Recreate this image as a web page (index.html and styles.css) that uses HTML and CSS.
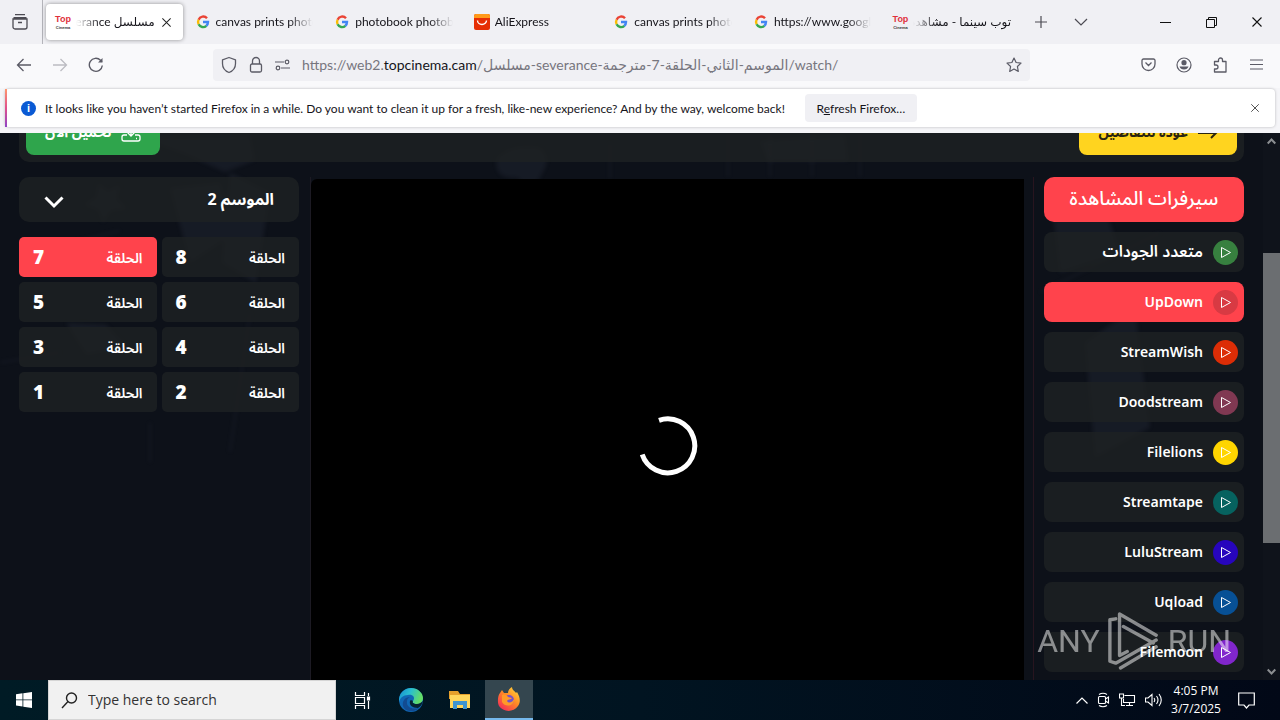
FILE: index.html
```html
<!DOCTYPE html>
<html lang="en">
<head>
<meta charset="utf-8">
<title>Top Cinema</title>
<link rel="stylesheet" href="styles.css">
</head>
<body>
<svg class="defs" aria-hidden="true">
  <symbol id="google" viewBox="0 0 16 16"><g fill="none" stroke-width="2.4"><path d="M12 4.2A5 5 0 0 0 3.6 5.7" stroke="#ea4335"/><path d="M3.6 5.7a5 5 0 0 0 0 4.6" stroke="#fbbc05"/><path d="M3.6 10.3a5 5 0 0 0 7.8 1.5" stroke="#34a853"/><path d="M8 8h5a5 5 0 0 1-1.7 3.8" stroke="#4285f4"/></g></symbol>
  <symbol id="play" viewBox="0 0 25 25"><path d="M8.500 7.500v10l9-5z" fill="none" stroke="#fff" stroke-linejoin="round"/></symbol>
  <symbol id="close" viewBox="0 0 12 12"><path d="M1.500 1.500l9 9M10.500 1.500l-9 9" fill="none" stroke="currentColor" stroke-width="1.100"/></symbol>
</svg>

<header class="tabs-bar">
  <button class="recent" aria-label="Recent browsing"><svg width="18" height="18" viewBox="0 0 18 18" fill="none" stroke="currentColor" stroke-width="1.300"><path d="M4 1.700h10M2.500 4.700h13M2 6h14v8a2 2 0 0 1-2 2H4a2 2 0 0 1-2-2zM7 9.500h4"/></svg></button>
  <nav class="tabs">
    <div class="tab active"><span class="logo"><b>Top</b><i>Cinema</i></span><span class="tab-title rtl" dir="rtl">مسلسل severance</span><button class="tab-close" aria-label="Close tab"><svg width="11" height="11"><use href="#close"/></svg></button></div>
    <div class="tab"><svg class="fav" width="16" height="16"><use href="#google"/></svg><span class="tab-title">canvas prints photo</span></div>
    <div class="tab"><svg class="fav" width="16" height="16"><use href="#google"/></svg><span class="tab-title">photobook photobook</span></div>
    <div class="tab"><svg class="fav" width="16" height="16" viewBox="0 0 16 16"><rect width="16" height="16" rx="2" fill="#e62e04"/><path d="M0 4V2a2 2 0 0 1 2-2h12a2 2 0 0 1 2 2v2z" fill="#ff9a1a"/><path d="M3.500 6.500a4.500 4 0 0 0 9 0" fill="none" stroke="#fff" stroke-width="1.400"/></svg><span class="tab-title">AliExpress</span></div>
    <div class="tab"><svg class="fav" width="16" height="16"><use href="#google"/></svg><span class="tab-title">canvas prints photo</span></div>
    <div class="tab"><svg class="fav" width="16" height="16"><use href="#google"/></svg><span class="tab-title">https://www.google.com</span></div>
    <div class="tab"><span class="logo"><b>Top</b><i>Cinema</i></span><span class="tab-title rtl" dir="rtl">توب سينما - مشاهدة</span></div>
  </nav>
  <button class="tab-tool" aria-label="New tab"><svg width="12" height="12" viewBox="0 0 12 12" stroke="currentColor" stroke-width="1.200"><path d="M6 0v12M0 6h12"/></svg></button>
  <button class="tab-tool" aria-label="List all tabs"><svg width="14" height="8" viewBox="0 0 14 8" fill="none" stroke="currentColor" stroke-width="1.200"><path d="M1 1l6 6 6-6"/></svg></button>
  <div class="window-controls">
    <button aria-label="Minimize"><svg width="11" height="11" viewBox="0 0 11 11" stroke="#111"><path d="M0 5.500h11"/></svg></button>
    <button aria-label="Restore"><svg width="11" height="11" viewBox="0 0 11 11" fill="none" stroke="#111"><path d="M.5 2.500h8v8h-8zM2.500 2.500v-2h8v8h-2"/></svg></button>
    <button aria-label="Close"><svg width="12" height="12"><use href="#close"/></svg></button>
  </div>
</header>

<div class="toolbar">
  <div class="nav-buttons">
    <button aria-label="Back"><svg width="16" height="14" viewBox="0 0 16 14" fill="none" stroke="currentColor" stroke-width="1.300"><path d="M15 7H2M7.500 1L1.500 7l6 6"/></svg></button>
    <button class="off" aria-label="Forward"><svg width="16" height="14" viewBox="0 0 16 14" fill="none" stroke="currentColor" stroke-width="1.300"><path d="M1 7h13M8.500 1l6 6-6 6"/></svg></button>
    <button aria-label="Reload"><svg width="16" height="16" viewBox="0 0 16 16" fill="none" stroke="currentColor" stroke-width="1.400"><path d="M14.300 8.500A6.500 6.500 0 1 1 12.500 3.300l1.500 1.500"/><path d="M14.500 1v4.500H10z" fill="currentColor" stroke="none"/></svg></button>
  </div>
  <div class="url-bar">
    <svg width="16" height="18" viewBox="0 0 16 18" fill="none" stroke="currentColor" stroke-width="1.300"><path d="M8 1.500l6.500 2.300v4C14.500 12 12 15 8 16.500 4 15 1.500 12 1.500 7.800v-4z" stroke-linejoin="round"/></svg>
    <svg width="14" height="18" viewBox="0 0 14 18" fill="none" stroke="currentColor" stroke-width="1.300"><rect x="1.500" y="8" width="11" height="8" rx="1.500"/><path d="M3.500 8V5a3.500 3.500 0 0 1 7 0v3"/></svg>
    <svg width="15" height="12" viewBox="0 0 15 12" fill="none" stroke="currentColor" stroke-width="1.200"><path d="M0 3h9M6 9h9"/><circle cx="12" cy="3" r="1.800"/><circle cx="3" cy="9" r="1.800"/></svg>
    <div class="url" role="textbox" tabindex="0" aria-label="Address">https://web2.<b>topcinema.cam</b>/مسلسل-severance-الموسم-الثاني-الحلقة-7-مترجمة/watch/</div>
    <button aria-label="Bookmark"><svg width="16" height="16" viewBox="0 0 16 16" fill="none" stroke="currentColor" stroke-width="1.200" stroke-linejoin="round"><path d="M8 1l2.100 4.500 4.900.6-3.600 3.400.9 4.900L8 12l-4.300 2.400.9-4.900L1 6.100l4.900-.6z"/></svg></button>
  </div>
  <div class="extras">
    <button aria-label="Save to Pocket"><svg width="15" height="14" viewBox="0 0 15 14" fill="none" stroke="currentColor" stroke-width="1.300"><path d="M2.500 1h10A1.500 1.500 0 0 1 14 2.500V6A6.500 6.500 0 0 1 1 6V2.500A1.500 1.500 0 0 1 2.500 1zM4.500 4.500l3 3 3-3"/></svg></button>
    <button aria-label="Account"><svg width="16" height="16" viewBox="0 0 16 16" fill="none" stroke="currentColor" stroke-width="1.200"><circle cx="8" cy="8" r="7"/><circle cx="8" cy="5.700" r="2.600" fill="currentColor" stroke="none"/><path d="M3.500 9.500h9a4.700 4.200 0 0 1-9 0z" fill="currentColor" stroke="none"/></svg></button>
    <button aria-label="Extensions"><svg width="15" height="16" viewBox="0 0 15 16" fill="none" stroke="currentColor" stroke-width="1.300"><path d="M1.500 4.500h4V3a2 2 0 0 1 4 0v1.500H13v10.500H1.500v-3H3a2 2 0 0 0 0-4H1.500z" stroke-linejoin="round"/></svg></button>
    <button aria-label="Menu"><svg width="13" height="11" viewBox="0 0 13 11" stroke="currentColor" stroke-width="1.200"><path d="M0 1h13M0 5.500h13M0 10h13"/></svg></button>
  </div>
</div>

<div class="notice-wrap">
  <div class="notice">
    <span class="info">i</span>
    <p>It looks like you haven’t started Firefox in a while. Do you want to clean it up for a fresh, like-new experience? And by the way, welcome back!</p>
    <button class="refresh">R<u>e</u>fresh Firefox…</button>
    <button class="notice-close" aria-label="Dismiss"><svg width="10" height="10"><use href="#close"/></svg></button>
  </div>
</div>

<div class="viewport">
  <main class="page" dir="rtl" lang="ar">
    <svg class="backdrop" viewBox="0 0 1263 548" preserveAspectRatio="none" aria-hidden="true">
      <g fill="#6f7896" opacity=".1"><path d="M497 25q15-15 43-10 10 8 5 20l-15 28-12-18q-25 2-21-20zM760 8l85-6 3 26h-80zM140 5l110-3 5 25-30 12-40-18zM98 50l10 8 12-6-3 14 10 10-16 2-8 12-5-13-14-5 12-8zM170 55l50-5 15 50-45 30zM66 190l40 2 20 22-40 8zM1050 55l50 5 20 60-60 20zM1085 210l50-35 15 120-55 30zM230 40l40 20-14 90-34-20z"/></g>
      <g fill="none" stroke="#8a91a8" opacity=".07"><path d="M728 0v44M770 0v44M812 0v44M860 0v44M610 10v36M30 120l90-22M0 230l60-10M1040 160l120-60M150 290v40M250 180l-20 140" stroke-width="2"/></g>
    </svg>
    <section class="actions">
      <a class="action back" href="#details"><svg width="20" height="14" viewBox="0 0 20 14" fill="none" stroke="currentColor" stroke-width="2"><path d="M0 7h18M13 2l5 5-5 5"/></svg>عودة للتفاصيل</a>
      <a class="action download" href="#download"><svg width="20" height="20" viewBox="0 0 20 20" fill="none" stroke="currentColor" stroke-width="1.300"><path d="M10 1v12M6 9l4 4 4-4M6 12H3a2 2 0 0 0-2 2v2a2 2 0 0 0 2 2h14a2 2 0 0 0 2-2v-2a2 2 0 0 0-2-2h-3M15 15.500h1"/></svg>تحميل الآن</a>
    </section>
    <div class="columns">
      <section class="servers">
        <h2>سيرفرات المشاهدة</h2>
        <button class="server arabic"><svg class="dot green"><use href="#play"/></svg>متعدد الجودات</button>
        <button class="server current"><svg class="dot dark-red"><use href="#play"/></svg>UpDown</button>
        <button class="server"><svg class="dot red"><use href="#play"/></svg>StreamWish</button>
        <button class="server"><svg class="dot plum"><use href="#play"/></svg>Doodstream</button>
        <button class="server"><svg class="dot yellow"><use href="#play"/></svg>Filelions</button>
        <button class="server"><svg class="dot teal"><use href="#play"/></svg>Streamtape</button>
        <button class="server"><svg class="dot indigo"><use href="#play"/></svg>LuluStream</button>
        <button class="server"><svg class="dot blue"><use href="#play"/></svg>Uqload</button>
        <button class="server"><svg class="dot violet"><use href="#play"/></svg>Filemoon</button>
      </section>
      <section class="player-frame">
        <div class="player"><svg width="60" height="60" viewBox="0 0 60 60" fill="none" stroke="#fff" stroke-width="5"><path d="M21 4.300A27 27 0 1 1 4.200 38.500"/></svg></div>
      </section>
      <section class="season">
        <button class="season-head"><span>الموسم 2</span><svg width="20" height="13" viewBox="0 0 20 13" fill="none" stroke="#fff" stroke-width="3"><path d="M1.500 1.500L10 10l8.500-8.500"/></svg></button>
        <div class="episodes">
          <a href="#e8"><span>الحلقة</span><b>8</b></a>
          <a href="#e7" class="current"><span>الحلقة</span><b>7</b></a>
          <a href="#e6"><span>الحلقة</span><b>6</b></a>
          <a href="#e5"><span>الحلقة</span><b>5</b></a>
          <a href="#e4"><span>الحلقة</span><b>4</b></a>
          <a href="#e3"><span>الحلقة</span><b>3</b></a>
          <a href="#e2"><span>الحلقة</span><b>2</b></a>
          <a href="#e1"><span>الحلقة</span><b>1</b></a>
        </div>
      </section>
    </div>
  </main>
  <div class="scrollbar" aria-hidden="true">
    <svg width="9" height="17" viewBox="0 0 9 17" fill="none" stroke="#8b8e91" stroke-width="2"><path d="M.7 10.500l3.800-4 3.800 4"/></svg>
    <span class="space-top"></span><span class="thumb"></span><span class="space-bottom"></span>
    <svg width="9" height="17" viewBox="0 0 9 17" fill="none" stroke="#8b8e91" stroke-width="2"><path d="M.7 6.500l3.800 4 3.800-4"/></svg>
  </div>
  <div class="watermark"><span>ANY</span><svg width="54" height="62" viewBox="0 0 56 62" fill="none" stroke="#fff" stroke-width="3.500" stroke-linejoin="round" stroke-linecap="round"><path d="M9 8l-6 1v43l6 2 42-24M51 25L13 3v43l8-4M17 16l31 17M51 37L14 59"/></svg><span>RUN</span></div>
</div>

<footer class="taskbar">
  <button class="start" aria-label="Start"><svg width="16" height="16" viewBox="0 0 16 16" fill="#fff"><path d="M0 2.200l6.500-.9v6.200H0zM7.300 1.200L16 0v7.500H7.300zM0 8.300h6.500v6.200L0 13.600zM7.300 8.300H16V16l-8.700-1.200z"/></svg></button>
  <label class="search"><svg width="17" height="17" viewBox="0 0 17 17" fill="none" stroke="#222" stroke-width="1.400"><circle cx="10.500" cy="6" r="5"/><path d="M7 9.500L1 16"/></svg><input type="text" placeholder="Type here to search" aria-label="Search"></label>
  <div class="apps">
    <button class="app" aria-label="Task view"><svg width="17" height="17" viewBox="0 0 17 17" fill="none" stroke="#fff" stroke-width="1.200"><path d="M1.500 0v3.500h9V0M1.500 5.500h9v6h-9zM1.500 17v-3.500h9V17M14.500 1v3M14.500 9v8"/><path d="M13.500 5h2v3h-2z" fill="#fff"/></svg></button>
    <button class="app" aria-label="Edge"><svg width="26" height="26" viewBox="0 0 26 26"><defs><linearGradient id="edge" x1="0" x2="1" y2=".3"><stop stop-color="#168bd0"/><stop offset=".5" stop-color="#29bfd0"/><stop offset="1" stop-color="#64dd67"/></linearGradient></defs><circle cx="13" cy="13" r="12" fill="#1067b5"/><path d="M1 12C2 5 7 1 13 1c7 0 12 5 12 10 0 4-3 6-6 6-4 0-5-2-4-3 3-4-1-7-5-6-5 0-8 3-9 7z" fill="url(#edge)"/><path d="M9 14c-1 6 5 9 12 7-5 5-14 4-16-2-1-5 2-9 7-9-2 1-3 2-3 4z" fill="#124b91"/><path d="M15 14c-1 1 0 3 4 3 2 0 4-1 6-3-1 4-3 6-5 7-6 0-9-3-8-7 0-1 2-1 3 0z" fill="#062333"/></svg></button>
    <button class="app" aria-label="File Explorer"><svg width="22" height="20" viewBox="0 0 22 20"><path d="M0 1h9l2 3h10v5H0z" fill="#e5a02c"/><path d="M1 5h20v13H1z" fill="#ffd65c"/><path d="M4 11h14v8h-4v-4H8v4H4z" fill="#3d94d1"/></svg></button>
    <button class="app running" aria-label="Firefox"><svg width="24" height="24" viewBox="0 0 24 24"><defs><linearGradient id="fox" x1="1" y1="0" x2=".2" y2="1"><stop stop-color="#ffe23e"/><stop offset=".5" stop-color="#ff8a25"/><stop offset="1" stop-color="#f52b58"/></linearGradient></defs><path d="M5 3l2 3 4 0c0-3 2-5 4-6 0 3 3 4 4 6l1-1c3 5 4 10 1 14-5 7-15 6-19 0C0 15 1 8 3 6z" fill="url(#fox)"/><circle cx="12" cy="13" r="5" fill="#7651c8"/><path d="M5 8c3-1 5 0 6 2l4 1c-1 2-4 1-5 3 2 3 6 1 7-2 1 7-9 9-12 3z" fill="#ff9a28"/></svg></button>
  </div>
  <div class="tray">
    <svg width="12" height="7" viewBox="0 0 12 7" fill="none" stroke="#fff" stroke-width="1.200"><path d="M.5 6.500L6 1l5.500 5.500"/></svg>
    <svg width="13" height="16" viewBox="0 0 13 16" fill="none" stroke="#fff" stroke-width="1.100"><rect x="1.500" y="4.500" width="7" height="7" rx="1"/><path d="M8.500 7l3-2v6l-3-2M2 2.500Q6 0 10 2.500M2 13.500q4 2.500 8 0"/></svg>
    <svg width="17" height="14" viewBox="0 0 17 14" fill="none" stroke="#fff" stroke-width="1.100"><path d="M5.500 2.500h10v7h-11V6M7 12.500h7M10.500 9.500v3M.5 1h4v4h-4zM2.500 5v7.500H6"/></svg>
    <svg width="17" height="14" viewBox="0 0 17 14" fill="none" stroke="#fff" stroke-width="1.100"><path d="M.5 5v4H3l4 3.500v-11L3 5zM9 5q1.500 2 0 4M11.500 3q3 4 0 8M14 1q4.500 6 0 12"/></svg>
    <time><span>4:05 PM</span><span>3/7/2025</span></time>
    <button aria-label="Notifications"><svg width="17" height="17" viewBox="0 0 17 17" fill="none" stroke="#fff" stroke-width="1.200"><path d="M.7 1h15.600v12H11l-2.500 3L6 13H.7z"/></svg></button>
  </div>
</footer>
</body>
</html>
```

FILE: styles.css
```css
* { box-sizing: border-box; }
body {
  margin: 0;
  height: 100vh;
  display: flex;
  flex-direction: column;
  overflow: hidden;
  font-family: Lato, "Open Sans", "DejaVu Sans", sans-serif;
  font-size: 12px;
  color: #15141a;
  background: #f9f9fb;
}
button { border: 0; padding: 0; background: none; font: inherit; color: inherit; display: grid; place-items: center; }
a { color: inherit; text-decoration: none; }
svg { display: block; flex: none; }
.defs { position: absolute; width: 0; height: 0; }

.tabs-bar { display: flex; align-items: center; height: 44px; flex: none; background: #f0f0f4; color: #4c4b53; }
.recent { width: 43px; height: 44px; flex: none; border-right: 1px solid #b4b4ba; padding-right: 3px; }
.tabs { display: flex; flex: 0 1 977px; min-width: 0; margin-left: 1px; }
.tab { flex: 1 1 0; min-width: 0; height: 36px; margin: 0 1px 0 2px; padding: 0 9px; display: flex; align-items: center; gap: 5px; border-radius: 4px; color: #15141a; }
.tab.active { background: #fff; box-shadow: 0 0 4px rgba(0, 0, 0, .4); }
.tab-title { flex: 1; min-width: 0; overflow: hidden; white-space: nowrap; line-height: 22px; -webkit-mask-image: linear-gradient(to left, transparent, #000 24px); mask-image: linear-gradient(to left, transparent, #000 24px); }
.tab-title.rtl { -webkit-mask-image: linear-gradient(to right, transparent, #000 24px); mask-image: linear-gradient(to right, transparent, #000 24px); }
.tab-close { width: 14px; height: 20px; color: #222; }
.logo { width: 16px; flex: none; display: flex; flex-direction: column; align-items: center; font-family: "Liberation Sans", sans-serif; }
.logo b { font-size: 9px; line-height: 11px; color: #e0303c; }
.logo i { font: bold 4px/6px "Liberation Sans", sans-serif; color: #333; }
.tab-tool { width: 40px; height: 44px; flex: none; }
.window-controls { display: flex; margin-left: auto; color: #111; }
.window-controls button { width: 46px; height: 44px; }

.toolbar { display: flex; align-items: center; justify-content: space-between; height: 44px; flex: none; color: #5b5b66; padding-bottom: 3px; }
.nav-buttons { display: flex; padding-left: 6px; }
.nav-buttons button { width: 36px; height: 32px; }
.nav-buttons .off { color: #bcbcc2; }
.url-bar { flex: 0 1 817px; height: 32px; margin-left: 99px; padding: 0 8px; display: flex; align-items: center; gap: 12px; background: #f0f0f4; border-radius: 4px; min-width: 0; }
.url { flex: 1; min-width: 0; overflow: hidden; white-space: nowrap; font-size: 14px; line-height: 26px; color: #77767e; }
.url b { font-weight: 400; color: #15141a; }
.extras { display: flex; margin-left: auto; padding-right: 6px; }
.extras button { width: 36px; height: 32px; }

.notice-wrap { flex: none; padding: 1px 5px 6px; background: #f5f5f8; }
.notice { display: flex; align-items: center; height: 38px; padding: 0 15px 0 14px; background: #fff; border-radius: 4px; border-left: 2px solid #b14aa8; border-image: linear-gradient(#ff9a6c, #e0508c, #8a42c8) 1; box-shadow: 0 0 3px rgba(0, 0, 0, .25); }
.info { width: 15px; height: 15px; flex: none; border-radius: 50%; background: #0a5ad4; color: #fff; font: bold 11px/15px "Liberation Sans", sans-serif; text-align: center; }
.notice p { margin: 0 20px 0 9px; white-space: nowrap; }
.refresh { height: 28px; width: 112px; background: #f0f0f4; border-radius: 4px; display: block; text-align: center; }
.notice-close { margin-left: auto; color: #444; }

.viewport { position: relative; flex: 1; min-height: 0; display: flex; overflow: hidden; background: #0d1119; }
.page { position: relative; flex: 1; min-width: 0; padding: 0 19px; overflow: hidden; color: #fff; font-family: "Noto Sans Arabic", "Noto Sans", "DejaVu Sans", sans-serif; }
.backdrop { position: absolute; inset: 0; width: 100%; height: 100%; filter: blur(2px); }
.actions, .columns { position: relative; }
.actions { margin-top: -30px; padding: 7px; display: flex; justify-content: space-between; background: rgba(30, 34, 35, .8); border-radius: 10px; }
.action { height: 45px; padding: 0 19px; display: flex; align-items: center; gap: 10px; border-radius: 8px; font-size: 14px; font-weight: 700; }
.back { background: #ffd41f; color: #2a2410; }
.download { background: #2fa54c; }
.columns { display: flex; margin-top: 15px; align-items: flex-start; }
.servers { width: 200px; flex: none; display: flex; flex-direction: column; gap: 10px; }
.servers h2 { margin: 0; height: 45px; border-radius: 10px; background: #ff434c; font-size: 19px; font-weight: 500; line-height: 44px; text-align: center; }
.server { height: 40px; padding: 0 6px; display: flex; align-items: center; gap: 10px; border-radius: 8px; background: rgba(30, 34, 35, .8); font-size: 14px; font-weight: 600; }
.server.arabic { font-size: 16px; }
.server.current { background: #ff434c; }
.dot { width: 25px; height: 25px; border-radius: 50%; }
.green { background: #37803f; }
.dark-red { background: #d83a43; }
.red { background: #dc2d06; }
.plum { background: #803852; }
.yellow { background: #ffd500; }
.teal { background: #06625f; }
.indigo { background: #2705bd; }
.blue { background: #075095; }
.violet { background: #8126cc; }
.player-frame { flex: 1; min-width: 0; margin: 0 10px 0 11px; padding: 2px 9px 0 0; border-right: 1px solid #28151f; border-left: 1px solid #1c1a23; }
.player { aspect-ratio: 4 / 3; display: grid; place-items: center; background: #000; border-radius: 6px 0 0; }
.season { width: 280px; flex: none; }
.season-head { width: 100%; height: 45px; padding: 0 25px; display: flex; align-items: center; justify-content: space-between; border-radius: 10px; background: rgba(30, 34, 35, .8); font-size: 16px; font-weight: 700; }
.season-head svg { margin-top: 6px; }
.episodes { margin-top: 15px; display: grid; grid-template-columns: 1fr 1fr; gap: 5px; }
.episodes a { height: 40px; padding: 2px 14px 0; display: flex; align-items: center; justify-content: space-between; border-radius: 5px; background: rgba(30, 34, 35, .8); font-size: 14px; font-weight: 600; }
.episodes b { font-size: 19px; }
.episodes .current { background: #ff434c; }

.scrollbar { width: 17px; flex: none; display: flex; flex-direction: column; align-items: center; background: #0f131b; }
.space-top { flex: 103; }
.thumb { flex: 290; width: 17px; background: #6b6e71; }
.space-bottom { flex: 120; }
.watermark { position: absolute; right: 49px; bottom: 8px; display: flex; align-items: center; gap: 7px; opacity: .5; color: #fff; font: 32px/62px Roboto, "Liberation Sans", sans-serif; }

.taskbar { height: 40px; flex: none; display: flex; background: linear-gradient(to right, #001b25, #011421 50%, #020817); color: #fff; font-family: "Open Sans", sans-serif; }
.start { width: 48px; }
.search { width: 288px; display: flex; align-items: center; gap: 10px; padding: 0 12px; background: #f1f1f1; border: 1px solid #d5d5d5; }
.search input { flex: 1; min-width: 0; border: 0; padding: 0; background: none; outline: 0; font: 14px/20px "Open Sans", sans-serif; }
.search input::placeholder { color: #333; opacity: 1; }
.apps { display: flex; gap: 1px; padding-left: 2px; }
.app { width: 48px; }
.running { background: #34464f; border-bottom: 2px solid #76b9ed; }
.tray { margin-left: auto; display: flex; align-items: center; gap: 9px; padding-right: 25px; }
.tray time { display: flex; flex-direction: column; align-items: center; width: 50px; font-size: 12px; line-height: 18px; }
.tray button { margin-left: 8px; }
```
